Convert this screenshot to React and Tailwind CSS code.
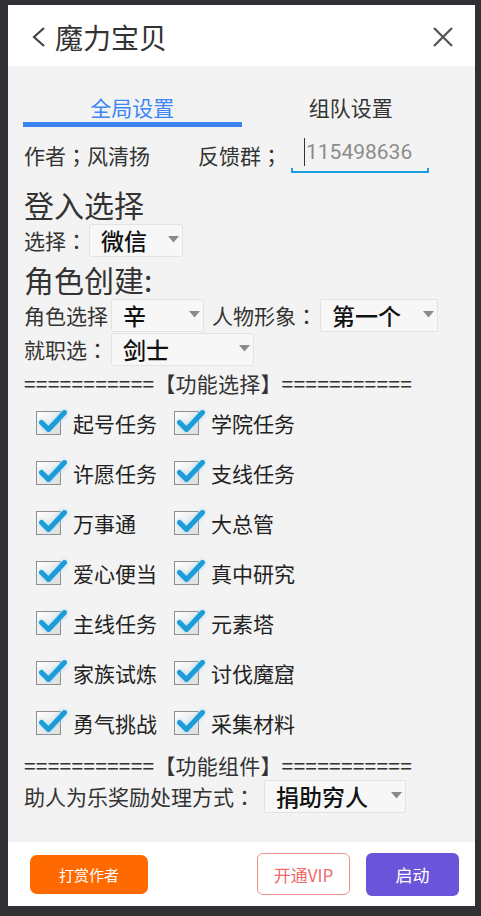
import React from "react";

const TASKS = [
  ["起号任务", "学院任务"],
  ["许愿任务", "支线任务"],
  ["万事通", "大总管"],
  ["爱心便当", "真中研究"],
  ["主线任务", "元素塔"],
  ["家族试炼", "讨伐魔窟"],
  ["勇气挑战", "采集材料"],
];

// centred full-width punctuation, as the phone font draws it
const P = ({ c }) => <span className="font-['Noto_Sans_CJK_TC',sans-serif]">{c}</span>;

function Select({ value, w }) {
  return (
    <div className={`h-[33px] ${w} flex items-center justify-between bg-[#f7f7f7] border border-[#e3e3e3] rounded-[2px] pl-[11px] pr-[3px]`}>
      <span className="text-[23px] leading-none text-[#111] font-medium">{value}</span>
      <svg width="11" height="7" viewBox="0 0 11 7" className="mb-[3px]">
        <path d="M0 0 L11 0 L5.5 6.5 Z" fill="#8a8a8a" />
      </svg>
    </div>
  );
}

function Check({ label }) {
  return (
    <div className="flex items-center">
      <span className="relative w-[25px] h-[24px] border border-[#8e8e8e] bg-gradient-to-br from-white to-[#dedede] shrink-0">
        <svg width="32" height="24" viewBox="0 0 32 24" className="absolute left-0 top-0 overflow-visible drop-shadow-[0_0_2px_#a6dcf5]">
          <path d="M4.5 10.5 L11.5 17.5 L27.5 0.5" fill="none" stroke="#1c9cd8" strokeWidth="5" strokeLinecap="round" strokeLinejoin="round" />
        </svg>
      </span>
      <span className="ml-[12px] text-[21px] leading-none text-[#222]">{label}</span>
    </div>
  );
}

export default function App() {
  return (
    <div className="w-[481px] h-[916px] bg-[#303134] pt-[5px] pl-[8px] pr-[6px] pb-[10px] flex font-['Noto_Sans_CJK_SC',sans-serif]">
      <div className="flex-1 flex flex-col bg-white">
        {/* header */}
        <div className="h-[61px] flex items-center pt-[3px] pl-[24px] pr-[22px] shrink-0">
          <svg width="14" height="20" viewBox="0 0 14 20">
            <path d="M12 1 L2 10 L12 19" fill="none" stroke="#444" strokeWidth="2.2" />
          </svg>
          <span className="ml-[9px] text-[28px] leading-none text-[#333]">魔力宝贝</span>
          <svg width="20" height="20" viewBox="0 0 20 20" className="ml-auto">
            <path d="M1 1 L19 19 M19 1 L1 19" stroke="#555" strokeWidth="2.3" />
          </svg>
        </div>

        {/* body */}
        <div className="h-[776px] bg-[#f3f3f3] shrink-0 flex flex-col">
          <div className="mx-[15px] flex">
            <div className="flex-1 flex flex-col">
              <div className="h-[56px] pt-[26px] flex items-center justify-center text-[21px] leading-none text-[#3b87f3]">全局设置</div>
              <div className="h-[5px] bg-[#3b84f4]" />
            </div>
            <div className="flex-1 h-[56px] pt-[26px] flex items-center justify-center text-[21px] leading-none text-[#333]">组队设置</div>
          </div>

          <div className="px-[16px] flex flex-col text-[#333]">
            <div className="mt-[8px] h-[40px] flex items-center text-[21px] leading-none">
              <span className="w-[174px]">作者<P c="；" />风清扬</span>
              <span className="w-[93px]">反馈群<P c="；" /></span>
              <div className="relative w-[138px] h-[40px] flex items-center">
                <span className="ml-[13px] w-px h-[28px] bg-[#333] -mt-[6px]" />
                <span className="ml-[1px] -mt-[6px] font-['Roboto',sans-serif] text-[21px] leading-none text-[#8c8c8c]">115498636</span>
                <div className="absolute left-0 right-0 bottom-[2px] h-[5px] border-x-2 border-b-2 border-[#1aa0dc]" />
              </div>
            </div>

            <div className="mt-[9px] h-[40px] flex items-center text-[30px] leading-none">登入选择</div>

            <div className="h-[33px] flex items-center text-[21px] leading-none">
              <span className="w-[65px]">选择<P c="：" /></span>
              <Select value="微信" w="w-[94px]" />
            </div>

            <div className="mt-[2px] h-[40px] flex items-center text-[30px] leading-none">角色创建:</div>

            <div className="h-[33px] flex items-center text-[21px] leading-none">
              <span className="w-[87px]">角色选择</span>
              <Select value="辛" w="w-[93px]" />
              <span className="w-[116px] pl-[8px]">人物形象<P c="：" /></span>
              <Select value="第一个" w="w-[118px]" />
            </div>

            <div className="mt-[1px] h-[33px] flex items-center text-[21px] leading-none">
              <span className="w-[87px]">就职选<P c="：" /></span>
              <Select value="剑士" w="w-[143px]" />
            </div>

            <div className="mt-[2px] h-[30px] flex items-center text-[21px] leading-none whitespace-nowrap tracking-[0.2px]">===========【功能选择】===========</div>

            <div className="flex flex-col pl-[12px]">
              {TASKS.map(([a, b]) => (
                <div key={a} className="h-[50px] flex items-center">
                  <div className="w-[138px]"><Check label={a} /></div>
                  <Check label={b} />
                </div>
              ))}
            </div>

            <div className="mt-[2px] h-[30px] flex items-center text-[21px] leading-none whitespace-nowrap tracking-[0.2px]">===========【功能组件】===========</div>

            <div className="h-[33px] flex items-center text-[21px] leading-none">
              <span className="w-[240px] whitespace-nowrap">助人为乐奖励处理方式<P c="：" /></span>
              <Select value="捐助穷人" w="w-[142px]" />
            </div>
          </div>
        </div>

        {/* footer */}
        <div className="h-[64px] shrink-0 flex items-center justify-between pl-[22px] pr-[16px]">
          <button className="w-[118px] h-[39px] rounded-[7px] bg-[#ff6a00] text-white text-[15px] leading-none">打赏作者</button>
          <div className="flex items-center gap-[16px]">
            <button className="w-[93px] h-[42px] rounded-[6px] border-[1.5px] border-[#f29090] bg-white text-[#ef6a6a] text-[17px] leading-none">开通VIP</button>
            <button className="w-[93px] h-[43px] rounded-[6px] bg-[#6a54da] text-white text-[17px] leading-none">启动</button>
          </div>
        </div>
      </div>
    </div>
  );
}
